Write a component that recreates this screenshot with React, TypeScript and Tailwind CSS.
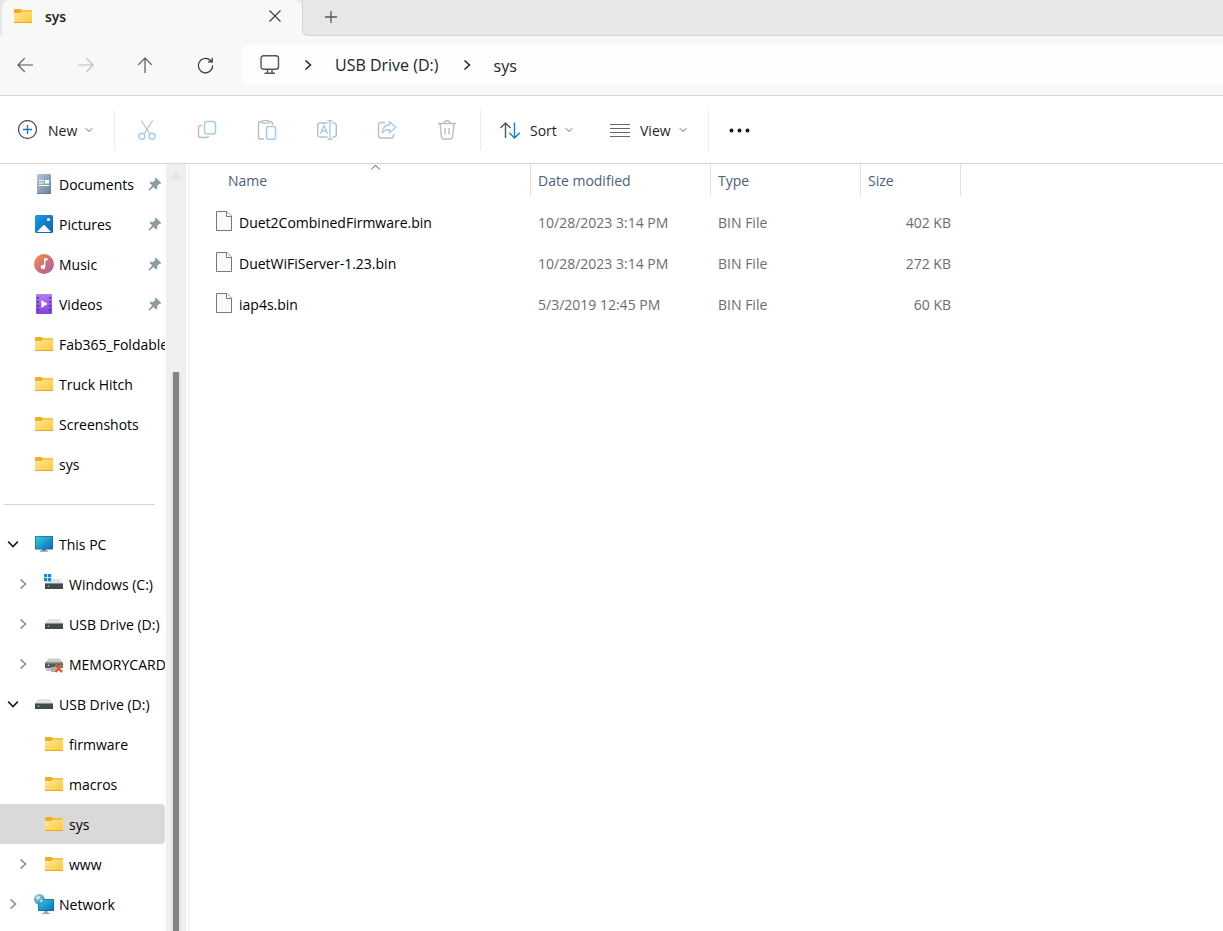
import React from "react";

type IconProps = { className?: string };

function Folder() {
  return (
    <svg width="20" height="20" viewBox="0 0 20 20" className="shrink-0" aria-hidden="true">
      <defs>
        <linearGradient id="folderFront" x1="0" y1="0" x2="1" y2="1">
          <stop offset="0" stopColor="#ffe69a" />
          <stop offset="1" stopColor="#ffc937" />
        </linearGradient>
      </defs>
      <path d="M1 3.600q0-.6.6-.6h5.600q.4 0 .7.3l.9.9h9.600q.6 0 .6.6V8H1z" fill="#f2ae1c" />
      <path d="M1 7h5.800q.5 0 .9-.4l.8-.9q.3-.3.8-.3H19V16.400q0 .6-.6.6H1.600q-.6 0-.6-.6z" fill="url(#folderFront)" />
      <path d="M1 16h18v.4q0 .6-.6.6H1.600q-.6 0-.6-.6z" fill="#e8a820" />
    </svg>
  );
}

function DocumentsIcon() {
  return (
    <svg width="20" height="20" viewBox="0 0 20 20" className="shrink-0" aria-hidden="true">
      <defs>
        <linearGradient id="docBody" x1="0" y1="0" x2="1" y2="1">
          <stop offset="0" stopColor="#b5c8da" />
          <stop offset="1" stopColor="#64829f" />
        </linearGradient>
      </defs>
      <rect x="3" y="0" width="14" height="20" rx="1.300" fill="url(#docBody)" />
      <path d="M5 6.500h5M5 9h5M5 11.500h10" stroke="#fff" strokeWidth="1.200" />
      <rect x="11" y="6" width="4" height="3.500" fill="#fff" />
      <path d="M3 19.500h14" stroke="#58748f" strokeWidth=".8" />
    </svg>
  );
}

function PicturesIcon() {
  return (
    <svg width="20" height="20" viewBox="0 0 20 20" className="shrink-0" aria-hidden="true">
      <defs>
        <linearGradient id="picSky" x1="0" y1="0" x2="1" y2="1">
          <stop offset="0" stopColor="#1d9be8" />
          <stop offset="1" stopColor="#0660b0" />
        </linearGradient>
      </defs>
      <rect x="1" y="1" width="18" height="18" rx="1.500" fill="url(#picSky)" />
      <path d="M2.800 18 9.200 11.300q.8-.8 1.600 0L17.200 18z" fill="#f3f9ff" />
      <circle cx="14.500" cy="5.500" r="1.600" fill="#fff" />
    </svg>
  );
}

function MusicIcon() {
  return (
    <svg width="20" height="20" viewBox="0 0 20 20" className="shrink-0" aria-hidden="true">
      <defs>
        <linearGradient id="musicDisc" x1="0" y1="0" x2="1" y2="1">
          <stop offset="0.100" stopColor="#ef8a53" />
          <stop offset="0.550" stopColor="#cc7078" />
          <stop offset="1" stopColor="#9a5cba" />
        </linearGradient>
      </defs>
      <circle cx="10" cy="10" r="10" fill="url(#musicDisc)" />
      <path d="M10 4.200h3.600v2.300H11.300V13H10z" fill="#fff" />
      <circle cx="9" cy="13" r="2.300" fill="#fff" />
    </svg>
  );
}

function VideosIcon() {
  return (
    <svg width="20" height="20" viewBox="0 0 20 20" className="shrink-0" aria-hidden="true">
      <defs>
        <linearGradient id="videoFilm" x1="0" y1="0" x2="0" y2="1">
          <stop offset="0" stopColor="#b47cf3" />
          <stop offset="1" stopColor="#8040e0" />
        </linearGradient>
      </defs>
      <rect x="2" y="0" width="16" height="20" rx="1.200" fill="url(#videoFilm)" />
      <path d="M4 3v15M16 3v15" stroke="#43207e" strokeWidth="1.600" strokeDasharray="1.600 2.400" />
      <path d="M7.300 6v8l6.300-4z" fill="#fff" />
    </svg>
  );
}

function Monitor() {
  return (
    <svg width="20" height="20" viewBox="0 0 20 20" className="shrink-0" aria-hidden="true">
      <defs>
        <linearGradient id="monitorScreen" x1="0" y1="0" x2="1" y2="1">
          <stop offset="0" stopColor="#31d2dd" />
          <stop offset="1" stopColor="#0b68bc" />
        </linearGradient>
      </defs>
      <path d="M8 15h4v2H8z" fill="#6d7a84" />
      <rect x="1" y="2" width="18" height="13.500" rx=".8" fill="#13679c" />
      <rect x="1.700" y="2.700" width="16.600" height="12.100" fill="url(#monitorScreen)" />
      <path d="M6 17.200h8" stroke="#8b98a1" strokeWidth="1.200" />
    </svg>
  );
}

function DriveBody() {
  return (
    <>
      <path d="M3.500 6Q4 5 5.500 5h9q1.500 0 2 1L19 9.500H1z" fill="#dfe1e3" />
      <rect x="1" y="9" width="18" height="6" rx=".6" fill="#46494c" />
      <path d="M1 9.500h18" stroke="#8b8d8f" />
      <circle cx="4.500" cy="12.200" r=".9" fill="#35e84a" />
    </>
  );
}

function DriveIcon() {
  return (
    <svg width="20" height="20" viewBox="0 0 20 20" className="shrink-0" aria-hidden="true">
      <DriveBody />
    </svg>
  );
}

function WindowsDriveIcon() {
  return (
    <svg width="20" height="20" viewBox="0 0 20 20" className="shrink-0 overflow-visible" aria-hidden="true">
      <DriveBody />
      <rect x="-1" y="-1" width="9" height="8" fill="#fff" />
      <path d="M0 0h3.200v3.200H0zM4 0h3.200v3.200H4zM0 4h3.200v3.200H0zM4 4h3.200v3.200H4z" fill="#0f8be0" />
    </svg>
  );
}

function BrokenDriveIcon() {
  return (
    <svg width="20" height="20" viewBox="0 0 20 20" className="shrink-0" aria-hidden="true">
      <path d="M3.500 5.500Q4 4.500 5.500 4.500h9q1.500 0 2 1L19 9H1z" fill="#c9caca" />
      <rect x="1" y="8.500" width="18" height="5.500" rx=".6" fill="#55585a" />
      <path d="M1 9h18" stroke="#939596" />
      <circle cx="4.500" cy="11.300" r=".8" fill="#d9dadb" />
      <path d="M2 14.500h5v-1.500h6v5H7v-1.500H2z" fill="#a9abad" />
      <path d="m11.500 11 6.500 7M18 11l-6.500 7" stroke="#fff" strokeWidth="3.200" opacity=".5" />
      <path d="m11.500 11 6.500 7M18 11l-6.500 7" stroke="#dd5124" strokeWidth="2.200" />
    </svg>
  );
}

function NetworkIcon() {
  return (
    <svg width="20" height="20" viewBox="0 0 20 20" className="shrink-0" aria-hidden="true">
      <defs>
        <linearGradient id="netScreen" x1="0" y1="0" x2="1" y2="1">
          <stop offset="0" stopColor="#30cede" />
          <stop offset="1" stopColor="#0b6fc0" />
        </linearGradient>
        <radialGradient id="netGlobe" cx=".35" cy=".3" r=".8">
          <stop offset="0" stopColor="#9fd3ee" />
          <stop offset="1" stopColor="#2a7fb0" />
        </radialGradient>
      </defs>
      <path d="M10.500 17h3v2h-3z" fill="#8b98a1" />
      <rect x="4" y="5" width="16" height="12" rx=".8" fill="#13679c" />
      <rect x="4.700" y="5.700" width="14.600" height="10.600" fill="url(#netScreen)" />
      <path d="M8 19.400h8" stroke="#9aa6ae" strokeWidth="1.100" />
      <circle cx="5.300" cy="5.300" r="5.300" fill="url(#netGlobe)" />
      <path d="M2 3.500q1.500-1.500 3.500-1.500l.8 1.500-1.800 1.700L3 5.500zM6.500 5.500l2.300.3-.5 2.200-1.600 1z" fill="#e4f3fa" opacity=".8" />
    </svg>
  );
}

function Pin() {
  return (
    <svg width="14" height="14" viewBox="0 0 14 14" className="shrink-0" aria-hidden="true">
      <path d="M7.900.6 13.300 6l-1.100 1-1-.2-2 2.200.1 2.500-1.200 1.100-2.700-2.700L1.700 13.400.6 13.500l.1-1.200 3.500-3.700L1.500 6l1.100-1.200 2.700.1L7.300 2.700 7 1.500z" fill="#8f9ba3" />
    </svg>
  );
}

function ChevronRight({ className }: IconProps) {
  return (
    <svg width="12" height="12" viewBox="0 0 12 12" fill="none" stroke="currentColor" strokeWidth="1.500" className={className} aria-hidden="true">
      <path d="m3.500 1.500 5 4.500-5 4.500" />
    </svg>
  );
}

function ChevronDown({ className }: IconProps) {
  return (
    <svg width="12" height="12" viewBox="0 0 12 12" fill="none" stroke="currentColor" strokeWidth="1.700" className={className} aria-hidden="true">
      <path d="m1.200 3.700 4.800 4.800 4.800-4.800" />
    </svg>
  );
}

function SmallChevron() {
  return (
    <svg width="8" height="8" viewBox="0 0 8 8" fill="none" stroke="#6b6b6b" className="shrink-0" aria-hidden="true">
      <path d="m.8 2.300 3.200 3.200 3.200-3.200" />
    </svg>
  );
}

function Line({ children }: { children: React.ReactNode }) {
  return (
    <svg width="20" height="20" viewBox="0 0 20 20" fill="none" strokeWidth="1.200" className="shrink-0" aria-hidden="true">
      {children}
    </svg>
  );
}

type TreeItem = {
  label: string;
  icon: React.ReactNode;
  nested?: boolean;
  pinned?: boolean;
  state?: "open" | "closed";
  selected?: boolean;
};

const quickAccess: TreeItem[] = [
  { label: "Documents", icon: <DocumentsIcon />, pinned: true },
  { label: "Pictures", icon: <PicturesIcon />, pinned: true },
  { label: "Music", icon: <MusicIcon />, pinned: true },
  { label: "Videos", icon: <VideosIcon />, pinned: true },
  { label: "Fab365_Foldable", icon: <Folder /> },
  { label: "Truck Hitch", icon: <Folder /> },
  { label: "Screenshots", icon: <Folder /> },
  { label: "sys", icon: <Folder /> },
];

const devices: TreeItem[] = [
  { label: "This PC", icon: <Monitor />, state: "open" },
  { label: "Windows (C:)", icon: <WindowsDriveIcon />, nested: true, state: "closed" },
  { label: "USB Drive (D:)", icon: <DriveIcon />, nested: true, state: "closed" },
  { label: "MEMORYCARD", icon: <BrokenDriveIcon />, nested: true, state: "closed" },
  { label: "USB Drive (D:)", icon: <DriveIcon />, state: "open" },
  { label: "firmware", icon: <Folder />, nested: true },
  { label: "macros", icon: <Folder />, nested: true },
  { label: "sys", icon: <Folder />, nested: true, selected: true },
  { label: "www", icon: <Folder />, nested: true, state: "closed" },
  { label: "Network", icon: <NetworkIcon />, state: "closed" },
];

const files = [
  { name: "Duet2CombinedFirmware.bin", date: "10/28/2023 3:14 PM", type: "BIN File", size: "402 KB" },
  { name: "DuetWiFiServer-1.23.bin", date: "10/28/2023 3:14 PM", type: "BIN File", size: "272 KB" },
  { name: "iap4s.bin", date: "5/3/2019 12:45 PM", type: "BIN File", size: "60 KB" },
];

function TreeRow({ item }: { item: TreeItem }) {
  return (
    <li>
      <a
        href="#"
        className={`mr-px flex h-10 items-center overflow-hidden whitespace-nowrap rounded-r-sm text-black ${item.nested ? "pl-[17px]" : "pl-[7px]"} ${item.selected ? "bg-[#d9d9d9]" : ""}`}
      >
        <span className="flex w-[27px] shrink-0">
          {item.state === "open" && <ChevronDown className="text-[#222222]" />}
          {item.state === "closed" && <ChevronRight className="text-[#858585]" />}
        </span>
        {item.icon}
        <span className="ml-[5px] pt-0.5">{item.label}</span>
        {item.pinned && (
          <span className="ml-auto mr-[3px]">
            <Pin />
          </span>
        )}
      </a>
    </li>
  );
}

function TabStrip() {
  return (
    <div className="flex h-9 bg-[#f8f8f8]">
      <div className="flex w-[302px] shrink-0 bg-[#e7e7e7] pl-[2px]">
        <div className="flex flex-1 items-center rounded-t-lg bg-[#f8f8f8] pb-1 pl-[11px] pr-5">
          <Folder />
          <span className="ml-3 pt-0.5 font-semibold text-[#1b1b1b]">sys</span>
          <button type="button" aria-label="Close tab" className="ml-auto">
            <svg width="14" height="14" viewBox="0 0 14 14" stroke="#3a3a3a" strokeWidth="1.100" aria-hidden="true">
              <path d="m1.500 1.500 11 11m0-11-11 11" />
            </svg>
          </button>
        </div>
      </div>
      <div className="flex flex-1 items-center rounded-bl-md border-b border-l border-[#d6d6d6] bg-[#e7e7e7] pb-0.5 pl-[21px]">
        <button type="button" aria-label="New tab">
          <svg width="14" height="14" viewBox="0 0 14 14" stroke="#555555" strokeWidth="1.300" aria-hidden="true">
            <path d="M7 1v12M1 7h12" />
          </svg>
        </button>
      </div>
    </div>
  );
}

const navButton = "flex size-10 items-center justify-center";

function NavigationBar() {
  return (
    <nav className="flex h-[60px] items-center border-b border-[#d4d4d4] bg-[#f8f8f8] pb-0.5 pl-[5px]">
      <div className="flex gap-5">
        <button type="button" aria-label="Back" className={navButton}>
          <Line><path d="M18 10H3M9.700 3.200 3 10l6.700 6.800" stroke="#555555" /></Line>
        </button>
        <button type="button" aria-label="Forward" className={navButton}>
          <Line><path d="M3 10h15M11.300 3.200 18 10l-6.700 6.800" stroke="#bcbcbc" /></Line>
        </button>
        <button type="button" aria-label="Up" className={navButton}>
          <Line><path d="M10 18V3M3.200 9.800 10 3l6.800 6.800" stroke="#555555" /></Line>
        </button>
        <button type="button" aria-label="Refresh" className={navButton}>
          <Line><path d="M17.700 10.500a7.200 7.200 0 1 1-2.400-5.300l1.700 1.500M17.200 2.800v4h-4.200" stroke="#333333" /></Line>
        </button>
      </div>
      <div className="ml-[18px] flex h-10 min-w-0 flex-1 items-center rounded-l-md bg-[#fdfdfd] pl-[17px] text-[16px] text-[#242424]">
        <Line>
          <rect x="1" y=".7" width="17.500" height="13.500" rx="2.500" stroke="#555555" strokeWidth="1.400" />
          <path d="M7.500 14.200V18m4.500-3.800V18M4.500 18.200H15" stroke="#555555" strokeWidth="1.400" />
        </Line>
        <ChevronRight className="ml-[22px] text-[#222222]" />
        <a href="#" className="ml-[21px]">USB Drive (D:)</a>
        <ChevronRight className="ml-[22px] text-[#222222]" />
        <a href="#" className="ml-[21px] pt-0.5">sys</a>
      </div>
    </nav>
  );
}

const toolButton = "flex h-10 w-[60px] items-center justify-center";

function Toolbar() {
  const grey = "#bdbdbd";
  const blue = "#a3cdf0";
  return (
    <div role="toolbar" className="flex h-[68px] items-center border-b border-[#d4d4d4] bg-white text-[#1f1f1f]">
      <button type="button" className="flex h-10 w-[115px] items-center border-r border-[#ebebeb] pl-[17px]">
        <Line>
          <circle cx="10.500" cy="9.500" r="9" stroke="#555555" strokeWidth="1.300" />
          <path d="M10.500 5v9M6 9.500h9" stroke="#1176cc" strokeWidth="1.300" />
        </Line>
        <span className="ml-[11px] mr-2 pt-0.5">New</span>
        <SmallChevron />
      </button>
      <div className="flex h-10 border-r border-[#ebebeb] pl-0.5 pr-[3px]">
        <button type="button" aria-label="Cut" className={toolButton}>
          <Line>
            <path d="M4.300.5 13 14M15.700.5 7 14" stroke={grey} />
            <circle cx="4.900" cy="16.200" r="3" stroke={blue} strokeWidth="1.400" />
            <circle cx="15.100" cy="16.200" r="3" stroke={blue} strokeWidth="1.400" />
          </Line>
        </button>
        <button type="button" aria-label="Copy" className={toolButton}>
          <Line>
            <path d="M5 5.500H4Q1.500 5.500 1.500 8v7q0 2.500 2.500 2.500h5q2 0 2.500-1.500" stroke={grey} strokeWidth="1.400" />
            <rect x="7.500" y="1.500" width="11" height="12.500" rx="2.500" stroke={blue} strokeWidth="1.500" />
          </Line>
        </button>
        <button type="button" aria-label="Paste" className={toolButton}>
          <Line>
            <path d="M7 19H3q-1.500 0-1.500-1.500V3.200q0-1.500 1.500-1.500h2M12 1.700h2q1.500 0 1.500 1.500V5" stroke={grey} strokeWidth="1.400" />
            <rect x="5" y=".6" width="7" height="2.600" rx="1.300" stroke={grey} />
            <rect x="9.500" y="6.500" width="9" height="12.800" rx="1.800" stroke={blue} strokeWidth="1.500" />
          </Line>
        </button>
        <button type="button" aria-label="Rename" className={toolButton}>
          <Line>
            <path d="M10.500 17H3.200Q.7 17 .7 14.500v-9Q.7 3 3.200 3h7.300M15.500 3h1q2.800 0 2.800 2.800v8.400q0 2.800-2.800 2.800h-1" stroke={grey} strokeWidth="1.400" />
            <path d="M3.200 14 6.900 5.500 10.600 14M4.500 11h4.800M13 .7v18.600M10.500.7h5M10.500 19.300h5" stroke={blue} strokeWidth="1.400" />
          </Line>
        </button>
        <button type="button" aria-label="Share" className={toolButton}>
          <Line>
            <path d="M8 2.500H4Q1.500 2.500 1.500 5v10.500Q1.500 18 4 18h10q2.500 0 2.500-2.500V14" stroke={grey} strokeWidth="1.400" />
            <path d="M12.500 1.700 19 7.200l-6.500 5.500V9.500Q8 9.300 5.200 13q.3-7.700 7.300-8.300z" stroke={blue} strokeWidth="1.400" strokeLinejoin="round" />
          </Line>
        </button>
        <button type="button" aria-label="Delete" className={toolButton}>
          <Line>
            <path d="M1 3.500h18M7 3.500Q7 .8 10 .8t3 2.700M3 3.500l1.500 13.700Q4.700 19 6.500 19h7q1.800 0 2-1.800L17 3.500M8 8v6.500M12 8v6.500" stroke={grey} strokeWidth="1.400" />
          </Line>
        </button>
      </div>
      <button type="button" className="flex h-10 w-[119px] items-center pl-[19px]">
        <Line>
          <path d="M5.500 18V3M.5 8l5-5 5 5" stroke="#555555" strokeWidth="1.400" />
          <path d="M14.500 2.500V18M9.300 12.800l5.200 5.200 5.200-5.200" stroke="#1382da" strokeWidth="1.400" />
        </Line>
        <span className="ml-[10px] mr-2 pt-0.5">Sort</span>
        <SmallChevron />
      </button>
      <button type="button" className="flex h-10 w-[109px] items-center border-r border-[#ebebeb] pl-[10px]">
        <Line>
          <path d="M0 4.500h20M0 8.500h20M0 12.500h20M0 16.500h20" stroke="#666666" strokeWidth="1.200" />
        </Line>
        <span className="ml-[10px] mr-2 pt-0.5">View</span>
        <SmallChevron />
      </button>
      <button type="button" aria-label="See more" className={toolButton}>
        <svg width="22" height="6" viewBox="0 0 22 6" fill="#111111" aria-hidden="true">
          <circle cx="3.500" cy="3.500" r="2" />
          <circle cx="11.500" cy="3.500" r="2" />
          <circle cx="19.500" cy="3.500" r="2" />
        </svg>
      </button>
    </div>
  );
}

function Sidebar() {
  return (
    <aside className="flex w-[189px] shrink-0 border-r border-[#f0f0f0]">
      <div className="w-[166px] shrink-0 overflow-hidden">
        <ul>
          {quickAccess.map((item) => (
            <TreeRow key={item.label} item={item} />
          ))}
        </ul>
        <div className="flex h-10 items-center pl-1 pr-[11px]">
          <hr className="w-full border-[#d4d4d4]" />
        </div>
        <ul>
          {devices.map((item, index) => (
            <TreeRow key={index} item={item} />
          ))}
        </ul>
      </div>
      <div className="flex w-5 flex-col items-center bg-[#efefef]">
        <div className="flex h-[208px] shrink-0 justify-center pt-2">
          <svg width="10" height="7" viewBox="0 0 10 7" fill="#e2e2e2" aria-hidden="true">
            <path d="M5 0l4.500 5.500q0 1.500-1 1.500h-7q-1 0-1-1.500z" />
          </svg>
        </div>
        <div className="w-[10px] flex-1 border-x-2 border-[#e4e4e4] bg-[#848484]" />
      </div>
    </aside>
  );
}

const headCell = "h-8 border-r border-[#e2e2e2] pl-[7px] pt-0.5 text-left font-normal";

function FileTable() {
  return (
    <table className="w-[772px] table-fixed border-separate border-spacing-0">
      <colgroup>
        <col className="w-[342px]" />
        <col className="w-[180px]" />
        <col className="w-[150px]" />
        <col className="w-[100px]" />
      </colgroup>
      <thead className="text-[#4c607a]">
        <tr>
          <th className="relative h-8 border-r border-[#e2e2e2] pl-[39px] pt-0.5 text-left font-normal">
            Name
            <svg width="10" height="6" viewBox="0 0 10 6" fill="none" stroke="#555555" className="absolute left-[182px] top-0" aria-hidden="true">
              <path d="M.2 5.500 4.500 1.200l4.300 4.300" />
            </svg>
          </th>
          <th className={headCell}>Date modified</th>
          <th className={headCell}>Type</th>
          <th className={headCell}>Size</th>
        </tr>
      </thead>
      <tbody className="text-[#6d6d6d] before:block before:h-1.5 before:content-['']">
        {files.map((file) => (
          <tr key={file.name}>
            <td className="h-[41px] pl-[27px]">
              <a href="#" className="flex items-center gap-[7px] text-black">
                <svg width="16" height="20" viewBox="0 0 16 20" fill="#fafafa" stroke="#777777" className="mb-[3px] shrink-0" aria-hidden="true">
                  <path d="M.5.500H11L15.500 5v14.500H.5z" />
                  <path d="M10.500.500V5.500h5" fill="#fff" />
                </svg>
                {file.name}
              </a>
            </td>
            <td className="pl-[7px]">{file.date}</td>
            <td className="pl-[7px]">{file.type}</td>
            <td className="pr-[10px] text-right">{file.size}</td>
          </tr>
        ))}
      </tbody>
    </table>
  );
}

export default function App() {
  return (
    <div className="flex min-h-screen flex-col bg-white font-['Open_Sans','Noto_Sans',sans-serif] text-[14px] leading-5">
      <TabStrip />
      <NavigationBar />
      <Toolbar />
      <div className="flex flex-1">
        <Sidebar />
        <main className="min-w-0 flex-1 overflow-hidden">
          <FileTable />
        </main>
      </div>
    </div>
  );
}
